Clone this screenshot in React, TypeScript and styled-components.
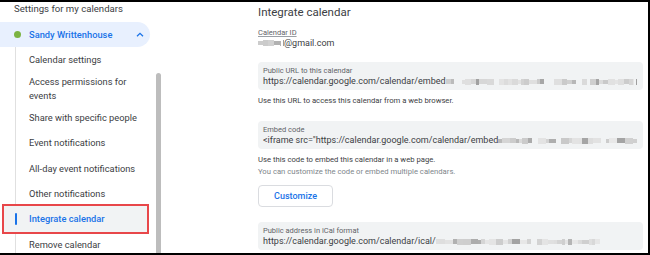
import styled, { createGlobalStyle } from "styled-components";

const GlobalStyle = createGlobalStyle`
  html, body {
    margin: 0;
    padding: 0;
    background: #ffffff;
  }
  body {
    font-family: Roboto, "Noto Sans", Arial, sans-serif;
    color: #3c4043;
  }
  * {
    box-sizing: border-box;
  }
`;

const Frame = styled.div`
  width: 650px;
  height: 255px;
  border-top: 2px solid #000;
  border-right: 2px solid #000;
  border-bottom: 2px solid #000;
  display: flex;
  overflow: hidden;
  background: #fff;
`;

const Sidebar = styled.aside`
  width: 163px;
  flex-shrink: 0;
  display: flex;
`;

const Nav = styled.nav`
  width: 150px;
  display: flex;
  flex-direction: column;
`;

const NavTitle = styled.div`
  padding-left: 14px;
  font-size: 9.6px;
  line-height: 13px;
  color: #3c4043;
  white-space: nowrap;
`;

const CalendarPill = styled.div`
  margin-top: 7px;
  height: 25px;
  flex-shrink: 0;
  display: flex;
  align-items: center;
  padding-left: 13.5px;
  padding-right: 6px;
  background: #e8f0fe;
  border-radius: 0 13px 13px 0;
`;

const Dot = styled.span<{ $color: string }>`
  width: 7px;
  height: 7px;
  border-radius: 50%;
  background: ${(p) => p.$color};
  flex-shrink: 0;
`;

const CalendarName = styled.span`
  margin-left: 8.5px;
  flex: 1;
  font-size: 9.3px;
  font-weight: 500;
  color: #1a73e8;
  white-space: nowrap;
`;

const SubList = styled.div`
  margin-left: 15px;
  border-left: 1px solid #e0e0e0;
  display: flex;
  flex-direction: column;
  flex: 1;
`;

const Item = styled.div<{ $active?: boolean }>`
  flex-shrink: 0;
  min-height: 25.3px;
  padding: 3px 4px 3px ${(p) => (p.$active ? "11px" : "13px")};
  margin-left: ${(p) => (p.$active ? "-12px" : "0")};
  margin-right: 3px;
  display: flex;
  align-items: center;
  font-size: 9.3px;
  line-height: 13.5px;
  color: ${(p) => (p.$active ? "#1a73e8" : "#3c4043")};
  font-weight: ${(p) => (p.$active ? 500 : 400)};
  background: ${(p) => (p.$active ? "#f1f3f4" : "transparent")};
  outline: ${(p) => (p.$active ? "2px solid #e8474a" : "none")};
`;

const Marker = styled.span`
  width: 2px;
  height: 12px;
  border-radius: 1px;
  background: #1a73e8;
  margin-right: 12px;
  flex-shrink: 0;
`;

const ScrollTrack = styled.div`
  width: 13px;
  padding-left: 6px;
  display: flex;
  flex-direction: column;
`;

const ScrollThumb = styled.div`
  margin-top: 71px;
  width: 5px;
  flex: 1;
  background: #bdbdbd;
  border-radius: 3px 3px 0 0;
`;

const Main = styled.main`
  flex: 1;
  padding: 2px 5px 0 95px;
  display: flex;
  flex-direction: column;
  min-width: 0;
`;

const Heading = styled.h1`
  margin: 0;
  font-size: 11.5px;
  line-height: 16px;
  font-weight: 400;
  color: #3c4043;
`;

const IdLabel = styled.div`
  margin-top: 8px;
  font-size: 7.5px;
  line-height: 10px;
  color: #5f6368;
  text-decoration: underline;
  text-decoration-color: #9aa0a6;
`;

const IdValue = styled.div`
  display: flex;
  align-items: center;
  font-size: 9px;
  line-height: 10px;
  color: #3c4043;
`;

const Field = styled.div<{ $gap: number }>`
  margin-top: ${(p) => p.$gap}px;
  height: 28px;
  flex-shrink: 0;
  padding: 4px 6px 3px 5px;
  background: #f1f3f4;
  border-radius: 4px;
  display: flex;
  flex-direction: column;
  overflow: hidden;
`;

const FieldLabel = styled.div`
  font-size: 7.5px;
  line-height: 10px;
  color: #5f6368;
`;

const FieldValue = styled.div`
  display: flex;
  align-items: center;
  font-size: 9px;
  line-height: 11px;
  color: #3c4043;
  white-space: nowrap;
  overflow: hidden;
`;

const Help = styled.p<{ $muted?: boolean; $gap?: number }>`
  margin: ${(p) => p.$gap ?? 0}px 0 0;
  font-size: 7.7px;
  line-height: 12px;
  color: ${(p) => (p.$muted ? "#80868b" : "#3c4043")};
`;

const CustomizeButton = styled.button`
  margin-top: 7px;
  align-self: flex-start;
  flex-shrink: 0;
  width: 75px;
  height: 22px;
  border: 1px solid #dadce0;
  border-radius: 4px;
  background: #fff;
  font-family: inherit;
  font-size: 9px;
  font-weight: 500;
  color: #1a73e8;
  padding: 0;
`;

const Smudge = styled.span<{ $grow?: boolean }>`
  display: inline-flex;
  align-items: center;
  height: 8px;
  overflow: hidden;
  flex: ${(p) => (p.$grow ? "1" : "none")};
  min-width: 0;
`;

const Pix = styled.span.attrs<{ $w: number; $h: number; $c: string }>((p) => ({
  style: { width: p.$w, height: p.$h, background: p.$c },
}))`
  display: inline-block;
  flex-shrink: 0;
`;

const EndTick = styled.span`
  width: 1px;
  height: 6px;
  margin-left: 2px;
  background: #9e9e9e;
  flex-shrink: 0;
`;

type PixData = { w: number; h: number; c: string };

// pixelated stand-in for the redacted parts of the screenshot
const makePixels = (seed: number, width: number, dark = 0.2): PixData[] => {
  let s = seed;
  const rnd = () => {
    s = (s * 9301 + 49297) % 233280;
    return s / 233280;
  };
  const out: PixData[] = [];
  let x = 0;
  while (x < width) {
    const w = 3 + Math.floor(rnd() * 6);
    const r = rnd();
    let c = "transparent";
    if (r < dark) {
      const t = Math.round(160 + rnd() * 35);
      c = `rgb(${t},${t},${t})`;
    } else if (r < 0.88) {
      const t = Math.round(200 + rnd() * 32);
      c = `rgb(${t},${t},${t})`;
    }
    out.push({ w, h: 4 + Math.floor(rnd() * 3), c });
    x += w;
  }
  return out;
};

const Blur = ({
  seed,
  width,
  grow,
  dark,
}: {
  seed: number;
  width: number;
  grow?: boolean;
  dark?: number;
}) => (
  <Smudge $grow={grow} style={grow ? undefined : { width }}>
    {makePixels(seed, width, dark).map((p, i) => (
      <Pix key={i} $w={p.w} $h={p.h} $c={p.c} />
    ))}
  </Smudge>
);

const Chevron = () => (
  <svg width="8" height="5" viewBox="0 0 8 5">
    <polyline points="1,4.3 4,1.3 7,4.3" fill="none" stroke="#1a73e8" strokeWidth="1.3" />
  </svg>
);

const items = [
  "Calendar settings",
  "Access permissions for events",
  "Share with specific people",
  "Event notifications",
  "All-day event notifications",
  "Other notifications",
  "Integrate calendar",
  "Remove calendar",
];

export default function App() {
  const active = "Integrate calendar";
  return (
    <>
      <GlobalStyle />
      <Frame>
        <Sidebar>
          <Nav>
            <NavTitle>Settings for my calendars</NavTitle>
            <CalendarPill>
              <Dot $color="#7cb342" />
              <CalendarName>Sandy Writtenhouse</CalendarName>
              <Chevron />
            </CalendarPill>
            <SubList>
              {items.map((label) => (
                <Item key={label} $active={label === active}>
                  {label === active && <Marker />}
                  <span>{label}</span>
                </Item>
              ))}
            </SubList>
          </Nav>
          <ScrollTrack>
            <ScrollThumb />
          </ScrollTrack>
        </Sidebar>
        <Main>
          <Heading>Integrate calendar</Heading>
          <IdLabel>Calendar ID</IdLabel>
          <IdValue>
            <Blur seed={7} width={23} dark={0.25} />
            <EndTick />
            <span>@gmail.com</span>
          </IdValue>
          <Field $gap={14}>
            <FieldLabel>Public URL to this calendar</FieldLabel>
            <FieldValue>
              <span>https://calendar.google.com/calendar/embed</span>
              <Blur seed={31} width={200} grow dark={0.12} />
              <EndTick />
            </FieldValue>
          </Field>
          <Help $gap={5}>Use this URL to access this calendar from a web browser.</Help>
          <Field $gap={14}>
            <FieldLabel>Embed code</FieldLabel>
            <FieldValue>
              <span>&lt;iframe src="https://calendar.google.com/calendar/embed</span>
              <Blur seed={53} width={160} grow dark={0.2} />
            </FieldValue>
          </Field>
          <Help $gap={5}>Use this code to embed this calendar in a web page.</Help>
          <Help $muted>You can customize the code or embed multiple calendars.</Help>
          <CustomizeButton>Customize</CustomizeButton>
          <Field $gap={15}>
            <FieldLabel>Public address in iCal format</FieldLabel>
            <FieldValue>
              <span>https://calendar.google.com/calendar/ical/</span>
              <Blur seed={97} width={165} dark={0.15} />
            </FieldValue>
          </Field>
        </Main>
      </Frame>
    </>
  );
}
